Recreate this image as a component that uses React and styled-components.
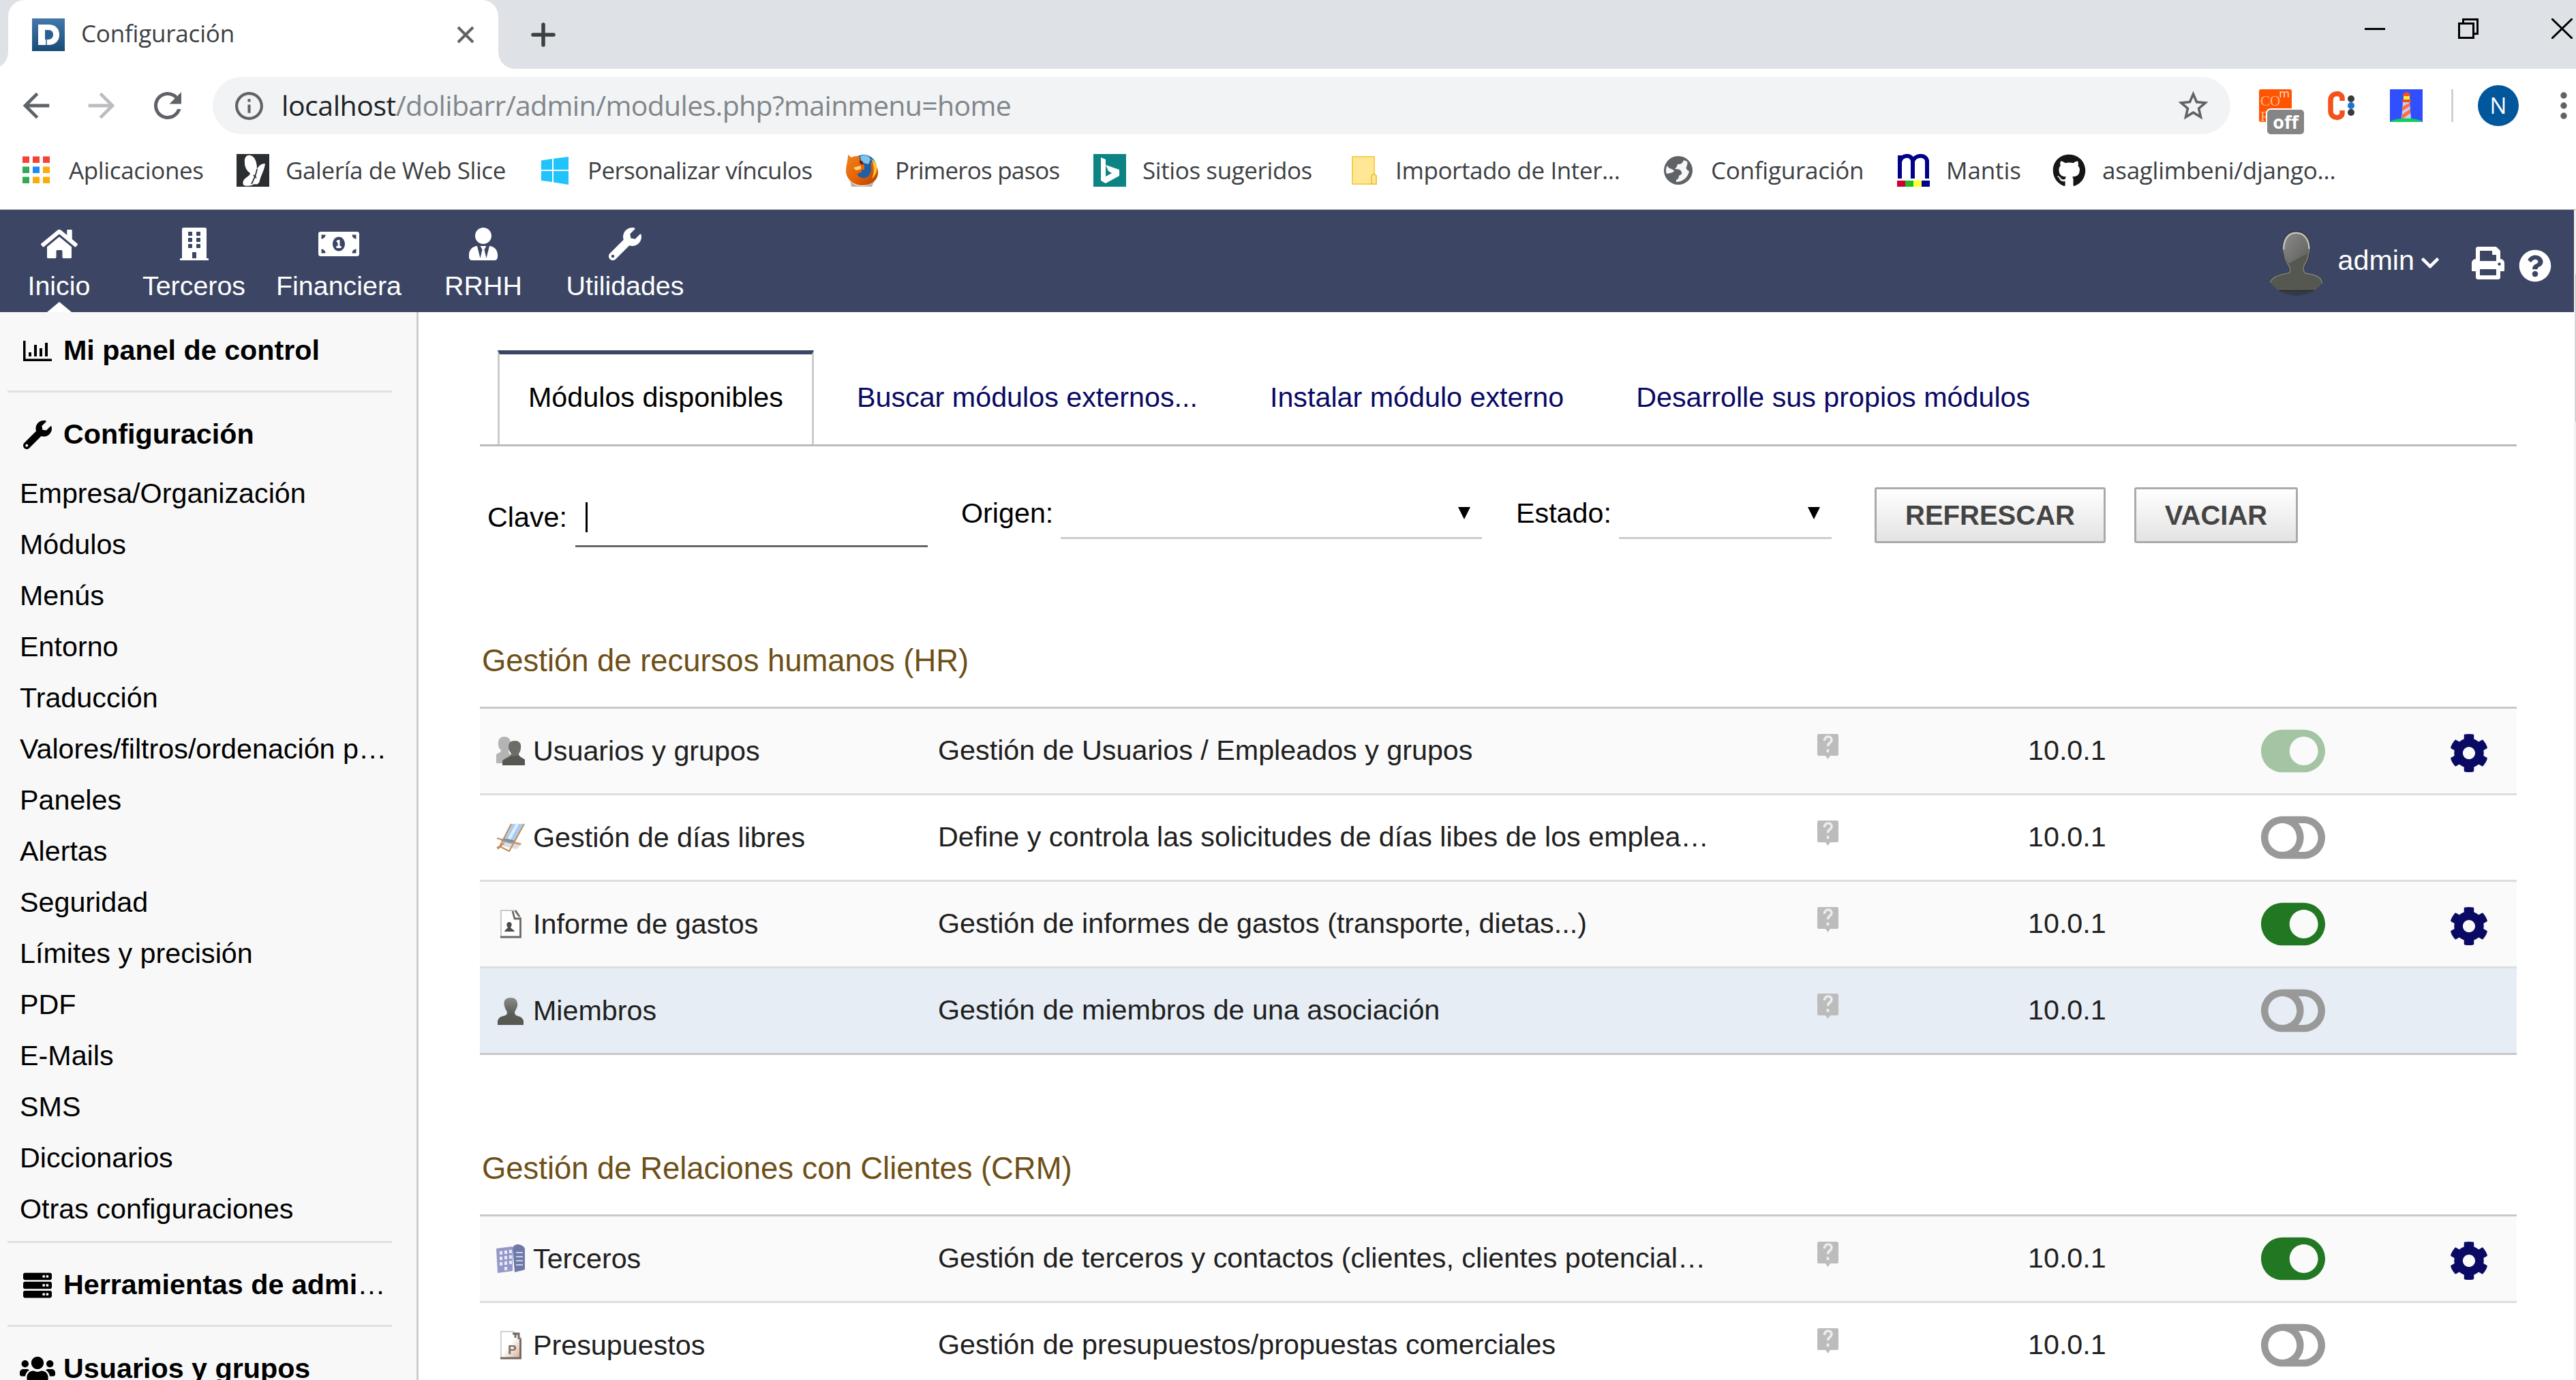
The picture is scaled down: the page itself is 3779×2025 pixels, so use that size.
import React from 'react';
import styled, { createGlobalStyle, css } from 'styled-components';
import {
  FaHome, FaBuilding, FaMoneyBillAlt, FaUserTie, FaWrench, FaChevronDown, FaPrint,
  FaQuestionCircle, FaServer, FaUsers, FaToggleOn, FaToggleOff, FaCog, FaGithub,
} from 'react-icons/fa';
import { MdArrowBack, MdArrowForward, MdRefresh, MdInfoOutline, MdStarBorder } from 'react-icons/md';

const GlobalStyle = createGlobalStyle`
  * { box-sizing: border-box; }
  body {
    margin: 0;
    background: #fff;
    font-family: 'Liberation Sans', Arial, sans-serif;
    font-size: 41.28px;
    color: #000;
  }
  svg { display: block; flex: none; }
`;

const Window = styled.div`
  display: flex;
  flex-direction: column;
  width: 3779px;
  height: 2025px;
  overflow: hidden;
`;

/* ---------- Browser chrome ---------- */

const uiFont = css`
  font-family: 'Open Sans', 'Noto Sans', sans-serif;
  white-space: pre;
`;

const TabStrip = styled.div`
  display: flex;
  flex: none;
  height: 101px;
  padding-left: 12px;
  background: #dee1e6;
`;

const BrowserTab = styled.div`
  position: relative;
  display: flex;
  align-items: center;
  width: 719px;
  padding: 0 35px;
  background: #fff;
  border-radius: 24px 24px 0 0;

  &::before,
  &::after {
    content: '';
    position: absolute;
    bottom: 0;
    width: 24px;
    height: 24px;
  }
  &::before {
    left: -24px;
    background: radial-gradient(circle at 0 0, transparent 23.5px, #fff 24px);
  }
  &::after {
    right: -24px;
    background: radial-gradient(circle at 100% 0, transparent 23.5px, #fff 24px);
  }
`;

const TabTitle = styled.span`
  ${uiFont}
  flex: 1;
  margin: -5px 0 0 24px;
  font-size: 35px;
  letter-spacing: -0.2px;
  color: #3c4043;
`;

const NewTab = styled.div`
  display: flex;
  align-items: center;
  padding-left: 48px;
`;

const WindowControls = styled.div`
  display: flex;
  gap: 107px;
  margin-left: auto;
  padding: 27px 5px 0 0;
`;

const AddressRow = styled.div`
  display: flex;
  flex: none;
  align-items: center;
  height: 108px;
  padding-left: 24px;
`;

const NavButton = styled.span`
  display: flex;
  width: 96px;
  color: ${(p) => (p.$muted ? '#bbbcbf' : '#5f6368')};
`;

const Omnibox = styled.div`
  display: flex;
  align-items: center;
  width: 2960px;
  height: 84px;
  padding: 0 28px 0 29px;
  border-radius: 42px;
  background: #f1f3f4;
  color: #5f6368;
`;

const Url = styled.div`
  ${uiFont}
  flex: 1;
  margin: -3px 0 0 23px;
  font-size: 41px;
  letter-spacing: -0.66px;
  color: #80868b;
`;

const Host = styled.span`
  letter-spacing: -0.45px;
  color: #202124;
`;

const Extensions = styled.div`
  display: flex;
  align-items: center;
  flex: 1;
  padding-left: 42px;
`;

const CookieExtension = styled.div`
  position: relative;
  width: 48px;
  height: 48px;
  border-radius: 3px;
  background: #ff5400;
  color: #ffb894;
  font: 21px/23px 'Liberation Serif', serif;
  padding: 6px 0 0 2px;
`;

const SmallM = styled.span`
  position: absolute;
  top: -5px;
  right: 3px;
  font: 17px/21px 'Open Sans', sans-serif;
  color: #ffe1d2;
`;

const OffBadge = styled.span`
  ${uiFont}
  position: absolute;
  left: 10px;
  top: 28px;
  width: 58px;
  height: 40px;
  border: 2px solid #fff;
  border-radius: 7px;
  background: #858585;
  color: #fff;
  font-size: 27px;
  font-weight: 700;
  line-height: 36px;
  text-align: center;
`;

const ColonExtension = styled.div`
  display: flex;
  width: 39px;
  margin-left: 53px;
`;

const LighthouseSlot = styled.div`
  margin-left: 52px;
`;

const Divider = styled.div`
  width: 3px;
  height: 48px;
  margin: 0 36px 0 42px;
  background: #cfd1d4;
`;

const Profile = styled.div`
  ${uiFont}
  width: 60px;
  height: 60px;
  margin-right: 61px;
  border-radius: 50%;
  background: #01579b;
  color: #fff;
  font-size: 33px;
  line-height: 59px;
  text-align: center;
`;

const BookmarksBar = styled.div`
  display: flex;
  flex: none;
  align-items: center;
  height: 99px;
  padding: 0 0 16px 29px;
  border-bottom: 1px solid #b4b4b4;
`;

const Bookmark = styled.div`
  ${uiFont}
  display: flex;
  align-items: center;
  flex: none;
  gap: 24px;
  width: ${(p) => p.$width}px;
  font-size: 35px;
  letter-spacing: ${(p) => p.$tracking}px;
  color: #3c4043;

  span { margin-top: -1px; }
`;

/* ---------- Application header ---------- */

const Page = styled.div`
  display: flex;
  flex: 1;
  min-height: 0;
`;

const Viewport = styled.div`
  display: flex;
  flex-direction: column;
  width: 3776px;
`;

const Scrollbar = styled.div`
  width: 3px;
  padding: 94px 0 0 2px;
  background: #f1f1f1;
`;

const ScrollThumb = styled.div`
  height: 217px;
  background: #c1c1c1;
`;

const TopNav = styled.nav`
  display: flex;
  flex: none;
  height: 150px;
  background: #3c4664;
  color: #fff;
  font-size: 39.4px;
`;

const TopNavIcon = styled.span`
  display: flex;
  align-items: center;
  height: 48px;
  margin-bottom: 14px;
`;

const TopNavItem = styled.a`
  position: relative;
  display: flex;
  flex-direction: column;
  align-items: center;
  width: ${(p) => p.$width}px;
  padding-top: 26px;
  line-height: 46px;

  ${(p) => p.$active && css`
    &::after {
      content: '';
      position: absolute;
      bottom: 0;
      border: solid transparent;
      border-width: 0 18px 15px;
      border-bottom-color: #fff;
    }
  `}
`;

const UserTools = styled.div`
  display: flex;
  align-items: center;
  margin-left: auto;
  padding: 6px 33px 0 0;
  font-size: 41.28px;
`;

const UserName = styled.span`
  margin: -7px 8px 0 21px;
`;

const PrintSlot = styled.span`
  margin: 0 21px 0 46px;
`;

const HelpSlot = styled.span`
  margin-top: 7px;
`;

/* ---------- Sidebar ---------- */

const Body = styled.div`
  display: flex;
  flex: 1;
  min-height: 0;
`;

const Sidebar = styled.aside`
  flex: none;
  width: 614px;
  padding: 0 36px 0 11px;
  border-right: 3px solid #ccc;
  background: #f8f8f8;
  overflow: hidden;
`;

const MenuBlock = styled.section`
  padding: ${(p) => (p.$first ? 19 : 24)}px 0 ${(p) => (p.$open ? 9 : 21)}px;
  border-bottom: 3px solid #e0e0e0;
`;

const MenuTitle = styled.div`
  display: flex;
  align-items: center;
  height: 75px;
  margin-bottom: ${(p) => (p.$open ? 12 : 0)}px;
  padding-left: 17px;
  font-weight: 700;
  line-height: 75px;
  white-space: nowrap;
`;

const MenuIcon = styled.span`
  display: flex;
  justify-content: center;
  flex: none;
  width: 53px;
  margin-right: 12px;
`;

const MenuEntry = styled.a`
  display: block;
  padding-left: 18px;
  line-height: 75px;
  white-space: nowrap;
`;

const Ellipsis = styled.span`
  font-weight: 400;
`;

/* ---------- Main content ---------- */

const Content = styled.main`
  flex: 1;
  padding: 56px 84px 0 90px;
  background: #fff;
`;

const Tabs = styled.div`
  display: flex;
  gap: 20px;
  height: 141px;
  padding-left: 26px;
  border-bottom: 3px solid #bbb;
`;

const ModuleTab = styled.a`
  padding: 0 40px;
  border: solid transparent;
  border-width: 6px 3px 0;
  color: #0a0a64;
  line-height: 127px;
  white-space: nowrap;

  ${(p) => p.$active && css`
    padding: 0 42px;
    border-color: #3c4664 #ccc;
    color: #000;
  `}
`;

const Filters = styled.form`
  display: flex;
  align-items: flex-start;
  height: 293px;
  padding: 60px 0 0 9px;
`;

const FieldLabel = styled.label`
  width: ${(p) => p.$width}px;
  margin-top: ${(p) => p.$drop}px;
  padding-left: 2px;
  line-height: 48px;
`;

const KeyInput = styled.div`
  width: 517px;
  height: 68px;
  margin: 20px 47px 0 0;
  padding: 2px 0 0 15px;
  border-bottom: 3px solid #666;
`;

const Caret = styled.div`
  width: 3px;
  height: 44px;
  background: #000;
`;

const Select = styled.div`
  display: flex;
  justify-content: flex-end;
  width: ${(p) => p.$width}px;
  height: 61px;
  margin: 15px ${(p) => p.$after}px 0 0;
  padding: 14px 17px 0 0;
  border-bottom: 3px solid #ccc;
`;

const SelectArrow = styled.span`
  height: 0;
  border: solid transparent;
  border-width: 18px 9px 0;
  border-top-color: #000;
`;

const Button = styled.button`
  width: ${(p) => p.$width}px;
  height: 82px;
  margin: 0 42px 0 0;
  padding: 0;
  border: 3px solid #aaa;
  border-radius: 3px;
  background: linear-gradient(#fff, #e3e3e3);
  color: #444;
  font: 700 40px 'Liberation Sans', Arial, sans-serif;
`;

const SectionTitle = styled.h2`
  margin: 0;
  padding: 0 0 0 3px;
  height: 89px;
  font-size: 45.41px;
  font-weight: 400;
  line-height: 44px;
  color: #6e4f17;
`;

const ModuleTable = styled.div`
  margin-bottom: 145px;
  border-top: 3px solid #c8c8c8;
  color: #202020;
`;

const ModuleRow = styled.div`
  display: grid;
  grid-template-columns: 648px 1289px 310px 342px 276px auto;
  align-items: center;
  height: 127px;
  padding-left: 24px;
  border-bottom: 3px solid #ddd;
  background: ${(p) => (p.$hover ? '#e6edf5' : '#fff')};
  white-space: nowrap;

  &:nth-child(odd) { background: #fafafa; }
  &:last-child { border-bottom-color: #c8c8c8; }
`;

const ModuleName = styled.div`
  display: flex;
  align-items: center;
  gap: 12px;
`;

const Cell = styled.div`
  padding-bottom: ${(p) => p.$lift || 0}px;
`;

const Toggle = styled.div`
  color: ${(p) => (p.$on ? '#227722' : '#999')};
  opacity: ${(p) => (p.$locked ? 0.4 : 1)};
`;

const Gear = styled.div`
  padding-top: 5px;
  color: #0a0a64;
`;

/* ---------- Drawings ---------- */

const DolibarrLogo = () => (
  <svg width="48" height="48" viewBox="0 0 48 48">
    <defs>
      <linearGradient id="doli" x1="0" y1="0" x2="0" y2="1">
        <stop offset="0" stopColor="#4478ab" /><stop offset="1" stopColor="#194b78" />
      </linearGradient>
    </defs>
    <rect width="48" height="48" fill="url(#doli)" />
    <path d="M9 9h15c10 0 16 6 16 15s-6 15-16 15H9z" fill="#fff" />
    <path d="M19 17h5c5 0 7 3 7 7s-3 7-7 7h-5z" fill="#2a5f93" />
    <path d="M21 22v17" stroke="#2a5f93" strokeWidth="1.5" />
  </svg>
);

const CrossIcon = () => (
  <svg width="26" height="26" viewBox="0 0 26 26" stroke="#5f6368" strokeWidth="4">
    <path d="M2 2l22 22M24 2L2 24" />
  </svg>
);

const PlusIcon = () => (
  <svg width="36" height="36" viewBox="0 0 36 36" stroke="#3c4043" strokeWidth="5.5" strokeLinecap="round">
    <path d="M18 3v30M3 18h30" />
  </svg>
);

const MinimizeIcon = () => (
  <svg width="30" height="30" viewBox="0 0 30 30"><path d="M0 15.5h30" stroke="#000" strokeWidth="3" /></svg>
);
const RestoreIcon = () => (
  <svg width="30" height="30" viewBox="0 0 30 30" fill="none" stroke="#000" strokeWidth="3">
    <path d="M1.5 7.500h21v21h-21zM7.500 7.500v-6h21v21h-6" />
  </svg>
);
const CloseIcon = () => (
  <svg width="31" height="30" viewBox="0 0 31 30" stroke="#000" strokeWidth="3"><path d="M0 0l31 30M31 0L0 30" /></svg>
);

const LetterCIcon = () => (
  <svg width="39" height="44" viewBox="0 0 39 44">
    <path d="M21 15V11C21 2 4 2 4 14v16c0 12 17 12 17 3v-4" fill="none" stroke="#f4511e" strokeWidth="7.500" />
    <circle cx="34" cy="12" r="5" fill="#3a3a3a" />
    <circle cx="34" cy="22" r="5" fill="#1a73d8" />
    <circle cx="34" cy="32" r="5" fill="#3a3a3a" />
  </svg>
);

const LighthouseIcon = () => (
  <svg width="48" height="48" viewBox="0 0 48 48">
    <rect width="48" height="48" fill="#304ffe" />
    <path d="M19 18h10l2 26H17z" fill="#c9cdf0" />
    <path d="M19 25l10-5v5l-11 7zM18 37l12-8v6l-12 9z" fill="#ff6d3f" />
    <path d="M19 10a5.500 6 0 0 1 11 0z" fill="#f4511e" />
    <path d="M20 10h9v6h-9z" fill="#ffeb3b" />
    <path d="M18 15h13v4H18z" fill="#e8531f" />
    <path d="M0 48c6-7 42-7 48 0z" fill="#0fce5a" />
  </svg>
);

const MoreIcon = () => (
  <svg width="10" height="40" viewBox="0 0 10 40" fill="#5f6368">
    <circle cx="5" cy="5" r="4.700" /><circle cx="5" cy="20" r="4.700" /><circle cx="5" cy="35" r="4.700" />
  </svg>
);

const AppsIcon = () => {
  const colors = ['#f44336', '#f44336', '#f44336', '#34a853', '#1e88f5', '#fbab0c', '#34a853', '#fbab0c', '#fbab0c'];
  return (
    <svg width="48" height="48" viewBox="0 0 48 48">
      {colors.map((c, i) => (
        <rect key={i} x={4 + (i % 3) * 15} y={3.500 + Math.floor(i / 3) * 15} width="10" height="9.500" fill={c} />
      ))}
    </svg>
  );
};

const SliceIcon = () => (
  <svg width="48" height="48" viewBox="0 0 48 48">
    <rect width="48" height="48" fill="#2b2f31" />
    <path d="M12 13C11 5 15 1 20 2c7 1 10 10 10 20 3-5 6-8 12-8-1 9-6 17-8 25-1 6-6 6-8 5-2 2-10 4-15 2-3-3-2-8 4-12 3-2 5-4 5-6-5-3-8-9-8-15z" fill="#fff" />
    <path d="M30 22c-1 8-5 16-8 22M25 31l4 4" stroke="#2b2f31" strokeWidth="1.800" fill="none" />
  </svg>
);

const WindowsIcon = () => (
  <svg width="48" height="48" viewBox="0 0 48 48" fill="#20c4fb">
    <path d="M4 9.500L20 7v16H4zM22 6.700L44 4v19H22zM4 25h16v16L4 39zM22 25h22v20l-22-3.500z" />
  </svg>
);

const FirefoxIcon = () => (
  <svg width="48" height="48" viewBox="0 0 48 48">
    <defs>
      <linearGradient id="fox" x1="0" y1="0" x2="1" y2="1">
        <stop offset="0" stopColor="#ee8420" /><stop offset=".55" stopColor="#e66000" /><stop offset="1" stopColor="#a8430c" />
      </linearGradient>
    </defs>
    <path d="M6 38c6 12 30 12 36 0l-4 10H8z" fill="#b9b2ae" />
    <circle cx="26" cy="20" r="19" fill="#1f5fa5" />
    <path d="M21 3c6-3 14 0 15 5l-3 7-10-3z" fill="#7cc4ee" />
    <path d="M3 1l5 4c4-2 8-3 12-1l1 9 6 3v7h-4v4c-4 0-6 2-6 4 3 5 13 6 17 0 4-6 4-13 2-19 8 3 12 9 11 17-1 11-11 17-23 17S1 38 0 26C0 16 3 10 3 1z" fill="url(#fox)" />
    <path d="M37 7c10 5 12 20 1 29 4-9 4-19-1-29z" fill="#ffc52e" />
    <path d="M11 20l11-3v5l-7 2z" fill="#ffd27a" />
    <path d="M20 9l5 2v5l-5-2z" fill="#7a1d08" />
  </svg>
);

const BingIcon = () => (
  <svg width="48" height="48" viewBox="0 0 48 48">
    <rect width="48" height="48" fill="#0c8484" />
    <path d="M11 5l7 3v25l9-5-5-3-4-9 20 7v9L18 43l-7-4z" fill="#fff" />
  </svg>
);

const FolderIcon = () => (
  <svg width="48" height="48" viewBox="0 0 48 48">
    <path d="M9 4h32v26l3 3v11H9z" fill="#ffe796" stroke="#f5cf4c" strokeWidth="2" />
    <path d="M37 44V32l3-3 4 3v12z" fill="#ffe796" stroke="#efc544" strokeWidth="2" />
  </svg>
);

const GlobeIcon = () => (
  <svg width="48" height="48" viewBox="0 0 48 48">
    <circle cx="24" cy="24" r="21" fill="#5f6368" />
    <path d="M32 9c-2 5-4 6-9 6-1 4-3 6-4 7 6 0 9 1 10 5 1 3-3 4-4 5 0 3-1 5-4 6v3c8 0 17-5 19-16-3-1-5-3-4-6s2-5 1-8zM8 17c-3 5-2 9-1 12 3-1 7-1 10-3 2-1 0-3-3-4-4-1-5-3-6-5z" fill="#fff" opacity=".95" />
  </svg>
);

const MantisIcon = () => (
  <svg width="48" height="48" viewBox="0 0 48 48">
    <path d="M4 36V2M4 12C6 0 23 0 23 11v25M23 12C25 0 44 0 44 11v25" fill="none" stroke="#00008b" strokeWidth="6" />
    <rect y="39" width="12" height="9" fill="#cc0033" />
    <rect x="12" y="39" width="12" height="9" fill="#22bb22" />
    <rect x="24" y="39" width="12" height="9" fill="#ffff33" />
    <rect x="36" y="39" width="12" height="9" fill="#00008b" />
  </svg>
);

const GithubIcon = () => <FaGithub size={49} color="#171515" />;

const ChartIcon = () => (
  <svg width="42" height="30" viewBox="0 0 42 30" fill="#000">
    <path d="M0 0h3.500v26.500H42V30H0zM8 17h4v6H8zM16 6h4v17h-4zM24 11h4v12h-4zM32 3h4v20h-4z" />
  </svg>
);

const Avatar = () => (
  <svg width="80" height="96" viewBox="120 653 240 288">
    <defs>
      <clipPath id="round"><circle cx="240" cy="797" r="144" /></clipPath>
      <linearGradient id="face" x1="0" y1="0" x2="1" y2="1">
        <stop offset="0" stopColor="#8b8c8a" /><stop offset="1" stopColor="#5d5f5b" />
      </linearGradient>
    </defs>
    <g clipPath="url(#round)">
      <path d="M176 735c0-45 20-80 62-80s64 35 64 80c0 12-5 20-6 32-2 20-14 34-20 46-3 12 0 20 4 24 40 10 76 12 82 55v26H118v-30c6-38 45-42 84-52 6-8 5-17 0-27-9-11-18-27-20-45-1-13-6-16-6-29z" fill="#323332" />
      <path d="M181 735c0-42 18-73 57-73s59 31 59 73c0 12-5 20-6 32-2 18-14 32-19 44-3 12 0 24 6 30 42 10 72 10 77 51v24H123v-28c6-34 43-39 84-48 7-9 6-19 0-30-8-11-17-26-19-43-1-13-7-19-7-32z" fill="#555751" stroke="#7d7f7a" strokeWidth="5" />
      <path d="M184 735c0-40 17-70 54-70s56 30 56 70c0 8-2 12-4 20-22 10-60 30-82 44-8-10-16-20-18-35-1-12-6-17-6-29z" fill="url(#face)" />
      <path d="M184 737c0-42 17-73 54-73s57 31 57 71" fill="none" stroke="#c9cac8" strokeWidth="6" />
      <path d="M110 918h260v25H110z" fill="#333b4b" />
      <path d="M110 918h260" stroke="#2c2d2c" strokeWidth="6" />
    </g>
  </svg>
);

const PersonIcon = () => (
  <svg width="42" height="42" viewBox="0 0 42 42">
    <defs>
      <linearGradient id="body" x1="0" y1="0" x2="0" y2="1">
        <stop offset="0" stopColor="#8b8c8a" /><stop offset=".6" stopColor="#5a5c56" /><stop offset="1" stopColor="#555751" />
      </linearGradient>
    </defs>
    <path d="M12 14C10 6 14 2 21 2s11 4 10 12c-1 4-3 7-4 9 0 4 2 5 5 6 5 1 7 4 8 7v6H2v-6c1-3 3-6 8-7 4-1 6-2 6-6-2-3-3-5-4-9z" fill="url(#body)" />
  </svg>
);

const GroupIcon = () => (
  <svg width="42" height="42" viewBox="0 0 42 42">
    <path d="M3 12C2 4 6 0 12 0s10 4 9 12c0 4-1 6-3 9 0 4 3 5 5 7v11H0V26c3-2 7-3 7-6-2-2-4-4-4-8z" fill="#b3b4b3" />
    <path d="M18 15c0-6 3-9 9-9s10 3 9 10c0 4-1 6-3 9 0 5 7 6 9 9v8H9v-6c2-5 12-6 13-11-2-3-4-6-4-10z" fill="#6b6d69" />
    <path d="M9 42v-6c2-3 8-4 12-7l12-1c3 3 7 4 9 6v8z" fill="#555751" />
  </svg>
);

const DeckchairIcon = () => (
  <svg width="42" height="42" viewBox="0 0 42 42">
    <path d="M8 33l22 5 8-9-20-5z" fill="#ddd" />
    <path d="M23 1h17L27 25l-15-3z" fill="#a9cdee" />
    <path d="M31 1L19 23" stroke="#e1effb" strokeWidth="4" />
    <path d="M11 22l16 3-4 5-16-4z" fill="#5f93c8" />
    <path d="M22 1L5 34l14 7L41 1M1 22l35 9M1 36l6-3M12 28L2 38" fill="none" stroke="#c08a5c" strokeWidth="2" />
  </svg>
);

const ExpenseIcon = () => (
  <svg width="42" height="42" viewBox="0 0 42 42">
    <path d="M7 1h19l9 10v29H7z" fill="#fff" stroke="#c9c9c9" strokeWidth="2" />
    <path d="M6 40h29.500V13H27L24 2M28 1l6 9" fill="none" stroke="#6e6763" strokeWidth="2.800" />
    <path d="M19 18c5 0 4 6 2 8 1 2 5 3 6 6H12c1-3 4-4 5-6-2-2-3-8 2-8z" fill="#4c4c4c" />
  </svg>
);

const ProposalIcon = () => (
  <svg width="42" height="42" viewBox="0 0 42 42">
    <defs>
      <linearGradient id="paper" x1="0" y1="0" x2="1" y2="1">
        <stop offset=".45" stopColor="#fff" /><stop offset="1" stopColor="#d9a78a" />
      </linearGradient>
    </defs>
    <path d="M7 1h18l11 9v30H7z" fill="url(#paper)" stroke="#d2d2d2" strokeWidth="2" />
    <path d="M6 40h29.500V11M24 4h9v8M28 3v7" fill="none" stroke="#6e6763" strokeWidth="2.800" />
    <text x="17" y="34" fontFamily="Liberation Sans" fontWeight="700" fontSize="19" fill="#77706b">P</text>
  </svg>
);

const CompanyIcon = () => (
  <svg width="42" height="42" viewBox="0 0 42 42">
    <path d="M0 6l24-3v36l-22 3z" fill="#9599c8" />
    <path d="M24 6c1-8 14-8 18 0v31l-15 4z" fill="#6d79a8" />
    <path d="M5 10h4v5H5zM12 9h4v5h-4zM19 8h4v5h-4zM5 18h4v5H5zM12 17h4v5h-4zM19 16h4v5h-4zM5 26h4v5H5zM12 25h4v5h-4zM19 24h4v5h-4zM12 33h4v5h-4z" fill="#e9eaf6" />
    <path d="M29 12h10M29 18h10M29 24h10M29 30h10" stroke="#c9cfe2" strokeWidth="2" />
  </svg>
);

const HintIcon = () => (
  <svg width="34" height="40" viewBox="0 0 34 40">
    <path d="M3 1h27c1 0 2 1 2 2v28c0 1-1 2-2 2H20l-3.500 5-3.500-5H3c-1 0-2-1-2-2V3c0-1 1-2 2-2z" fill="#bcbcbc" />
    <path d="M11.500 11c0-8 10.500-7.500 10.500-1.500 0 5-5.500 4-5.500 9.500M16.500 23.500v4.500" fill="none" stroke="#ededed" strokeWidth="3.600" />
  </svg>
);

/* ---------- Data ---------- */

const bookmarks = [
  { label: 'Aplicaciones', icon: AppsIcon, width: 318, tracking: -0.35 },
  { label: 'Galería de Web Slice', icon: SliceIcon, width: 443, tracking: -0.4 },
  { label: 'Personalizar vínculos', icon: WindowsIcon, width: 451, tracking: -0.65 },
  { label: 'Primeros pasos', icon: FirefoxIcon, width: 363, tracking: -0.8 },
  { label: 'Sitios sugeridos', icon: BingIcon, width: 371, tracking: -0.4 },
  { label: 'Importado de Inter...', icon: FolderIcon, width: 463, tracking: -0.4 },
  { label: 'Configuración', icon: GlobeIcon, width: 345, tracking: -0.25 },
  { label: 'Mantis', icon: MantisIcon, width: 228, tracking: -0.1 },
  { label: 'asaglimbeni/django...', icon: GithubIcon, width: 440, tracking: -0.25 },
];

const topMenu = [
  { label: 'Inicio', icon: FaHome, size: 54, width: 173, active: true },
  { label: 'Terceros', icon: FaBuilding, size: 48, width: 223 },
  { label: 'Financiera', icon: FaMoneyBillAlt, size: 60, width: 202 },
  { label: 'RRHH', icon: FaUserTie, size: 48, width: 222 },
  { label: 'Utilidades', icon: FaWrench, size: 48, width: 194 },
];

const setupEntries = [
  'Empresa/Organización', 'Módulos', 'Menús', 'Entorno', 'Traducción', 'Valores/filtros/ordenación p…',
  'Paneles', 'Alertas', 'Seguridad', 'Límites y precisión', 'PDF', 'E-Mails', 'SMS', 'Diccionarios',
  'Otras configuraciones',
];

const sections = [
  {
    title: 'Gestión de recursos humanos (HR)',
    modules: [
      { name: 'Usuarios y grupos', icon: GroupIcon, text: 'Gestión de Usuarios / Empleados y grupos', on: true, locked: true, setup: true },
      { name: 'Gestión de días libres', icon: DeckchairIcon, text: 'Define y controla las solicitudes de días libes de los emplea…' },
      { name: 'Informe de gastos', icon: ExpenseIcon, text: 'Gestión de informes de gastos (transporte, dietas...)', on: true, setup: true },
      { name: 'Miembros', icon: PersonIcon, text: 'Gestión de miembros de una asociación', hover: true },
    ],
  },
  {
    title: 'Gestión de Relaciones con Clientes (CRM)',
    modules: [
      { name: 'Terceros', icon: CompanyIcon, text: 'Gestión de terceros y contactos (clientes, clientes potencial…', on: true, setup: true },
      { name: 'Presupuestos', icon: ProposalIcon, text: 'Gestión de presupuestos/propuestas comerciales' },
    ],
  },
];

const Module = ({ name, icon: Icon, text, on, locked, setup, hover }) => (
  <ModuleRow $hover={hover}>
    <ModuleName><Icon />{name}</ModuleName>
    <Cell $lift={1}>{text}</Cell>
    <Cell $lift={12}><HintIcon /></Cell>
    <Cell $lift={1}>10.0.1</Cell>
    <Toggle $on={on} $locked={locked}>
      {on ? <FaToggleOn size={94} /> : <FaToggleOff size={94} />}
    </Toggle>
    {setup && <Gear><FaCog size={58} /></Gear>}
  </ModuleRow>
);

export default function App() {
  return (
    <Window>
      <GlobalStyle />
      <TabStrip>
        <BrowserTab>
          <DolibarrLogo />
          <TabTitle>Configuración</TabTitle>
          <CrossIcon />
        </BrowserTab>
        <NewTab><PlusIcon /></NewTab>
        <WindowControls><MinimizeIcon /><RestoreIcon /><CloseIcon /></WindowControls>
      </TabStrip>

      <AddressRow>
        <NavButton><MdArrowBack size={58} /></NavButton>
        <NavButton $muted><MdArrowForward size={58} /></NavButton>
        <NavButton><MdRefresh size={60} /></NavButton>
        <Omnibox>
          <MdInfoOutline size={49} />
          <Url><Host>localhost</Host>/dolibarr/admin/modules.php?mainmenu=home</Url>
          <MdStarBorder size={53} />
        </Omnibox>
        <Extensions>
          <CookieExtension>
            CO<br />R
            <SmallM>m</SmallM>
            <OffBadge>off</OffBadge>
          </CookieExtension>
          <ColonExtension><LetterCIcon /></ColonExtension>
          <LighthouseSlot><LighthouseIcon /></LighthouseSlot>
          <Divider />
          <Profile>N</Profile>
          <MoreIcon />
        </Extensions>
      </AddressRow>

      <BookmarksBar>
        {bookmarks.map(({ label, icon: Icon, width, tracking }) => (
          <Bookmark key={label} $width={width} $tracking={tracking}><Icon /><span>{label}</span></Bookmark>
        ))}
      </BookmarksBar>

      <Page>
        <Viewport>
          <TopNav>
            {topMenu.map(({ label, icon: Icon, size, width, active }) => (
              <TopNavItem key={label} $width={width} $active={active}>
                <TopNavIcon><Icon size={size} /></TopNavIcon>
                {label}
              </TopNavItem>
            ))}
            <UserTools>
              <Avatar />
              <UserName>admin</UserName>
              <FaChevronDown size={30} />
              <PrintSlot><FaPrint size={48} /></PrintSlot>
              <HelpSlot><FaQuestionCircle size={48} /></HelpSlot>
            </UserTools>
          </TopNav>

          <Body>
            <Sidebar>
              <MenuBlock $first>
                <MenuTitle><MenuIcon><ChartIcon /></MenuIcon>Mi panel de control</MenuTitle>
              </MenuBlock>
              <MenuBlock $open>
                <MenuTitle $open><MenuIcon><FaWrench size={42} /></MenuIcon>Configuración</MenuTitle>
                {setupEntries.map((entry) => <MenuEntry key={entry}>{entry}</MenuEntry>)}
              </MenuBlock>
              <MenuBlock>
                <MenuTitle><MenuIcon><FaServer size={42} /></MenuIcon>Herramientas de admi<Ellipsis>…</Ellipsis></MenuTitle>
              </MenuBlock>
              <MenuBlock>
                <MenuTitle><MenuIcon><FaUsers size={52} /></MenuIcon>Usuarios y grupos</MenuTitle>
              </MenuBlock>
            </Sidebar>

            <Content>
              <Tabs>
                <ModuleTab $active>Módulos disponibles</ModuleTab>
                <ModuleTab>Buscar módulos externos...</ModuleTab>
                <ModuleTab>Instalar módulo externo</ModuleTab>
                <ModuleTab>Desarrolle sus propios módulos</ModuleTab>
              </Tabs>
              <Filters>
                <FieldLabel $width={131} $drop={20}>Clave:</FieldLabel>
                <KeyInput><Caret /></KeyInput>
                <FieldLabel $width={148} $drop={14}>Origen:</FieldLabel>
                <Select $width={618} $after={48}><SelectArrow /></Select>
                <FieldLabel $width={153} $drop={14}>Estado:</FieldLabel>
                <Select $width={312} $after={63}><SelectArrow /></Select>
                <Button type="button" $width={339}>REFRESCAR</Button>
                <Button type="button" $width={240}>VACIAR</Button>
              </Filters>
              {sections.map(({ title, modules }) => (
                <React.Fragment key={title}>
                  <SectionTitle>{title}</SectionTitle>
                  <ModuleTable>
                    {modules.map((module) => <Module key={module.name} {...module} />)}
                  </ModuleTable>
                </React.Fragment>
              ))}
            </Content>
          </Body>
        </Viewport>
        <Scrollbar><ScrollThumb /></Scrollbar>
      </Page>
    </Window>
  );
}
